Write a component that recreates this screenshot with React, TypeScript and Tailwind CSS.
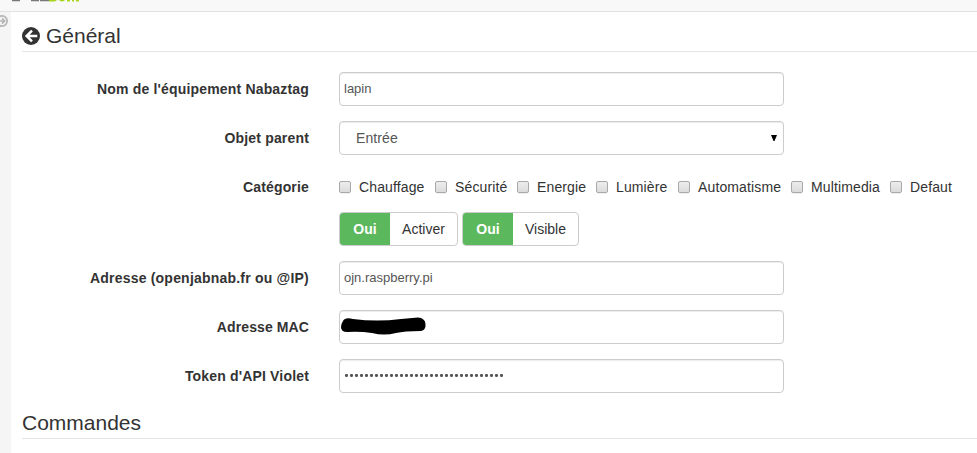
import React from "react";

const inputBox =
  "flex h-[34px] w-[445px] items-center rounded-[4px] border border-[#ccc] bg-white shadow-[inset_0_1px_1px_rgba(0,0,0,0.075)] text-[#555]";

function Row({ label, tracking = "tracking-[0.17px]", children }: { label: string; tracking?: string; children: React.ReactNode }) {
  return (
    <div className="mb-[15px] flex h-[34px]">
      <div className={`w-[287px] shrink-0 pt-[7px] text-right font-bold leading-5 whitespace-nowrap ${tracking}`}>{label}</div>
      <div className="ml-[30px]">{children}</div>
    </div>
  );
}

function Check({ label, width }: { label: string; width: string }) {
  return (
    <label className={`flex shrink-0 items-center whitespace-nowrap ${width}`}>
      <span className="mr-2 h-3 w-3 shrink-0 rounded-[2px] border border-[#a9a9a9] bg-linear-to-b from-[#ededed] to-[#dcdcdc] shadow-[0_1px_0_rgba(0,0,0,0.06)]" />
      <span className="tracking-[0.13px]">{label}</span>
    </label>
  );
}

function Toggle({ label, width }: { label: string; width: string }) {
  return (
    <div className={`flex h-[34px] overflow-hidden rounded-[4px] border border-[#ccc] bg-white leading-8 ${width}`}>
      <span className="w-[50px] bg-[#5cb85c] text-center font-bold text-white">Oui</span>
      <span className="flex-1 text-center">{label}</span>
    </div>
  );
}

export default function App() {
  return (
    <div className="flex h-[453px] w-[977px] flex-col overflow-hidden bg-white font-['Liberation_Sans',Arial,sans-serif] text-sm text-[#333]">
      <header className="h-3 shrink-0 overflow-hidden border-b border-[#e2e2e2] bg-[#f8f8f8]">
        <svg width="100" height="3" viewBox="0 0 100 3" className="block">
          <path fill="#77777c" d="M12 0h8v1.300h-8zM31 0h8v1.300h-8zM40 0h9v1.300h-9z" />
          <path fill="#a6d31b" d="M49 0h8q-1 1.400-3 1.400h-5zM59 0h6q-1 1.400-3 1.400t-3-1.400zM67 0h3v1.400h-3zM72 0h2v1.400h-2zM76 0h3v1.400h-3z" />
        </svg>
      </header>
      <div className="flex min-h-0 flex-1">
        <aside className="w-[11px] shrink-0 overflow-hidden bg-[#f5f5f5] pt-[3px]">
          <svg width="12" height="12" viewBox="0 0 12 12" className="-ml-[4px] block" fill="none" stroke="#b5b5b5" strokeWidth="1.7">
            <circle cx="6" cy="6" r="5.150" />
            <path d="M2.5 6h6M6 3.3 8.7 6 6 8.7" />
          </svg>
        </aside>
        <main className="flex-1 pl-[11px]">
          <h1 className="flex h-10 items-center border-b border-[#e5e5e5] pt-[9px] text-[21px] leading-[30px]">
            <svg width="18" height="18" viewBox="0 0 18 18" className="mr-[6px]">
              <circle cx="9" cy="9" r="9" fill="#333" />
              <path d="M15.3 9H4.5M10 3.6 4.600 9 10 14.400" fill="none" stroke="#fff" strokeWidth="2.5" />
            </svg>
            <span>Général</span>
          </h1>
          <section className="pt-5">
            <Row label="Nom de l'équipement Nabaztag">
              <div className={`${inputBox} px-1 text-[13px]`}>lapin</div>
            </Row>
            <Row label="Objet parent">
              <div className={`${inputBox} justify-between pl-4 pr-[6px]`}>
                <span className="tracking-[0.1px]">Entrée</span>
                <svg width="6" height="6" viewBox="0 0 6 6"><path d="M0 0h6L3.5 6h-1z" fill="#000" /></svg>
              </div>
            </Row>
            <div className="mb-2 flex h-[34px]">
              <div className="w-[287px] shrink-0 pt-[7px] text-right font-bold leading-5 tracking-[0.17px]">Catégorie</div>
              <div className="ml-[30px] flex pt-[7px] pb-[7px] leading-5">
                <Check label="Chauffage" width="w-[96px]" />
                <Check label="Sécurité" width="w-[82px]" />
                <Check label="Energie" width="w-[79px]" />
                <Check label="Lumière" width="w-[82px]" />
                <Check label="Automatisme" width="w-[113px]" />
                <Check label="Multimedia" width="w-[99px]" />
                <Check label="Defaut" width="w-[70px]" />
              </div>
            </div>
            <div className="mb-[15px] ml-[317px] flex gap-1">
              <Toggle label="Activer" width="w-[119px]" />
              <Toggle label="Visible" width="w-[117px]" />
            </div>
            <Row label="Adresse (openjabnab.fr ou @IP)" tracking="tracking-[0.21px]">
              <div className={`${inputBox} px-1 text-[13px]`}>ojn.raspberry.pi</div>
            </Row>
            <Row label="Adresse MAC" tracking="tracking-[0.1px]">
              <div className={inputBox}>
                <svg width="90" height="20" viewBox="0 0 90 20" className="-mt-0.5 ml-px">
                  <path d="M2 5Q4 1 12 3Q36 6 60 3L77 1.500Q84 2 84.500 8Q85 14 80 15Q63 15 55 17Q43 20 31 17Q18 15 6 16Q0 16 0 11Q0 8 2 5Z" fill="#000" />
                </svg>
              </div>
            </Row>
            <Row label="Token d'API Violet">
              <div className={`${inputBox} pl-1`}>
                <svg width="162" height="4" viewBox="0 0 162 4">
                  <line x1="2.500" y1="1.500" x2="158" y2="1.500" stroke="#555" strokeWidth="3.2" strokeLinecap="round" strokeDasharray="0 5" />
                </svg>
              </div>
            </Row>
          </section>
          <h2 className="h-[31px] border-b border-[#e5e5e5] text-[21px] leading-[30px]">Commandes</h2>
        </main>
      </div>
    </div>
  );
}
